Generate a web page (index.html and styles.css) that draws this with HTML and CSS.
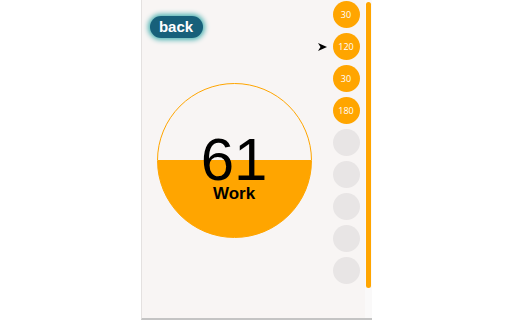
FILE: index.html
```html
<!DOCTYPE html>
<html lang="en">
<head>
    <meta charset="UTF-8">
    <title>Timer</title>
    <link rel="stylesheet" href="styles.css">
</head>
<body>
    <div class="panel">
        <div class="main">
            <button class="back-btn">back</button>
            <div class="dial">
                <div class="dial-count">61</div>
                <div class="dial-label">Work</div>
            </div>
        </div>

        <div class="steps">
            <div class="step done">30</div>
            <div class="step done current">
                <svg class="pointer" width="9" height="8" viewBox="0 0 9 8"><polygon points="0,0 9,4 0,8 2.5,4" fill="#000"/></svg>
                120
            </div>
            <div class="step done">30</div>
            <div class="step done">180</div>
            <div class="step"></div>
            <div class="step"></div>
            <div class="step"></div>
            <div class="step"></div>
            <div class="step"></div>
        </div>

        <div class="track">
            <div class="thumb"></div>
        </div>
    </div>
</body>
</html>
```

FILE: styles.css
```css
body {
    margin: 0;
    background-color: #fff;
    font-family: "Liberation Sans", Arial, sans-serif;
}
.panel {
    display: flex;
    width: 230px;
    height: 318px;
    margin: 0 auto;
    background-color: #f8f5f4;
    border-left: 1px solid #e4e1e0;
    border-bottom: 2px solid #c4c4c4;
}
.main {
    width: 183px;
    padding: 16px 0 0 8px;
}
.back-btn {
    display: block;
    width: 53px;
    height: 22px;
    padding: 0;
    border: none;
    border-radius: 11px;
    background-color: #17607a;
    box-shadow: 0 0 5px 2px #4fb3b3;
    color: #fff;
    font-family: "Liberation Sans", Arial, sans-serif;
    font-size: 15px;
    font-weight: bold;
    line-height: 22px;
}
.dial {
    box-sizing: border-box;
    width: 155px;
    height: 155px;
    margin: 45px 0 0 7px;
    padding-top: 51px;
    border: 1px solid #ffa500;
    border-radius: 50%;
    background: linear-gradient(to bottom, transparent 50%, #ffa500 50%);
    text-align: center;
    color: #000;
}
.dial-count {
    font-size: 60px;
    line-height: 50px;
}
.dial-label {
    margin-top: 2px;
    font-size: 17px;
    font-weight: bold;
    line-height: 14px;
}
.steps {
    display: flex;
    flex-direction: column;
    gap: 5px;
    width: 27px;
    padding-top: 1px;
    margin-right: 5px;
}
.step {
    position: relative;
    width: 27px;
    height: 27px;
    border-radius: 50%;
    background-color: #e8e5e5;
    color: #fff;
    font-family: "Open Sans", sans-serif;
    font-size: 9px;
    line-height: 27px;
    text-align: center;
}
.step.done {
    background-color: #ffa500;
}
.pointer {
    position: absolute;
    left: -15px;
    top: 10px;
}
.track {
    width: 7px;
    padding: 2px 1px 0 1px;
    box-sizing: border-box;
    background-color: #faf9f9;
}
.thumb {
    height: 286px;
    border-radius: 3px;
    background-color: #ffa500;
}
```
